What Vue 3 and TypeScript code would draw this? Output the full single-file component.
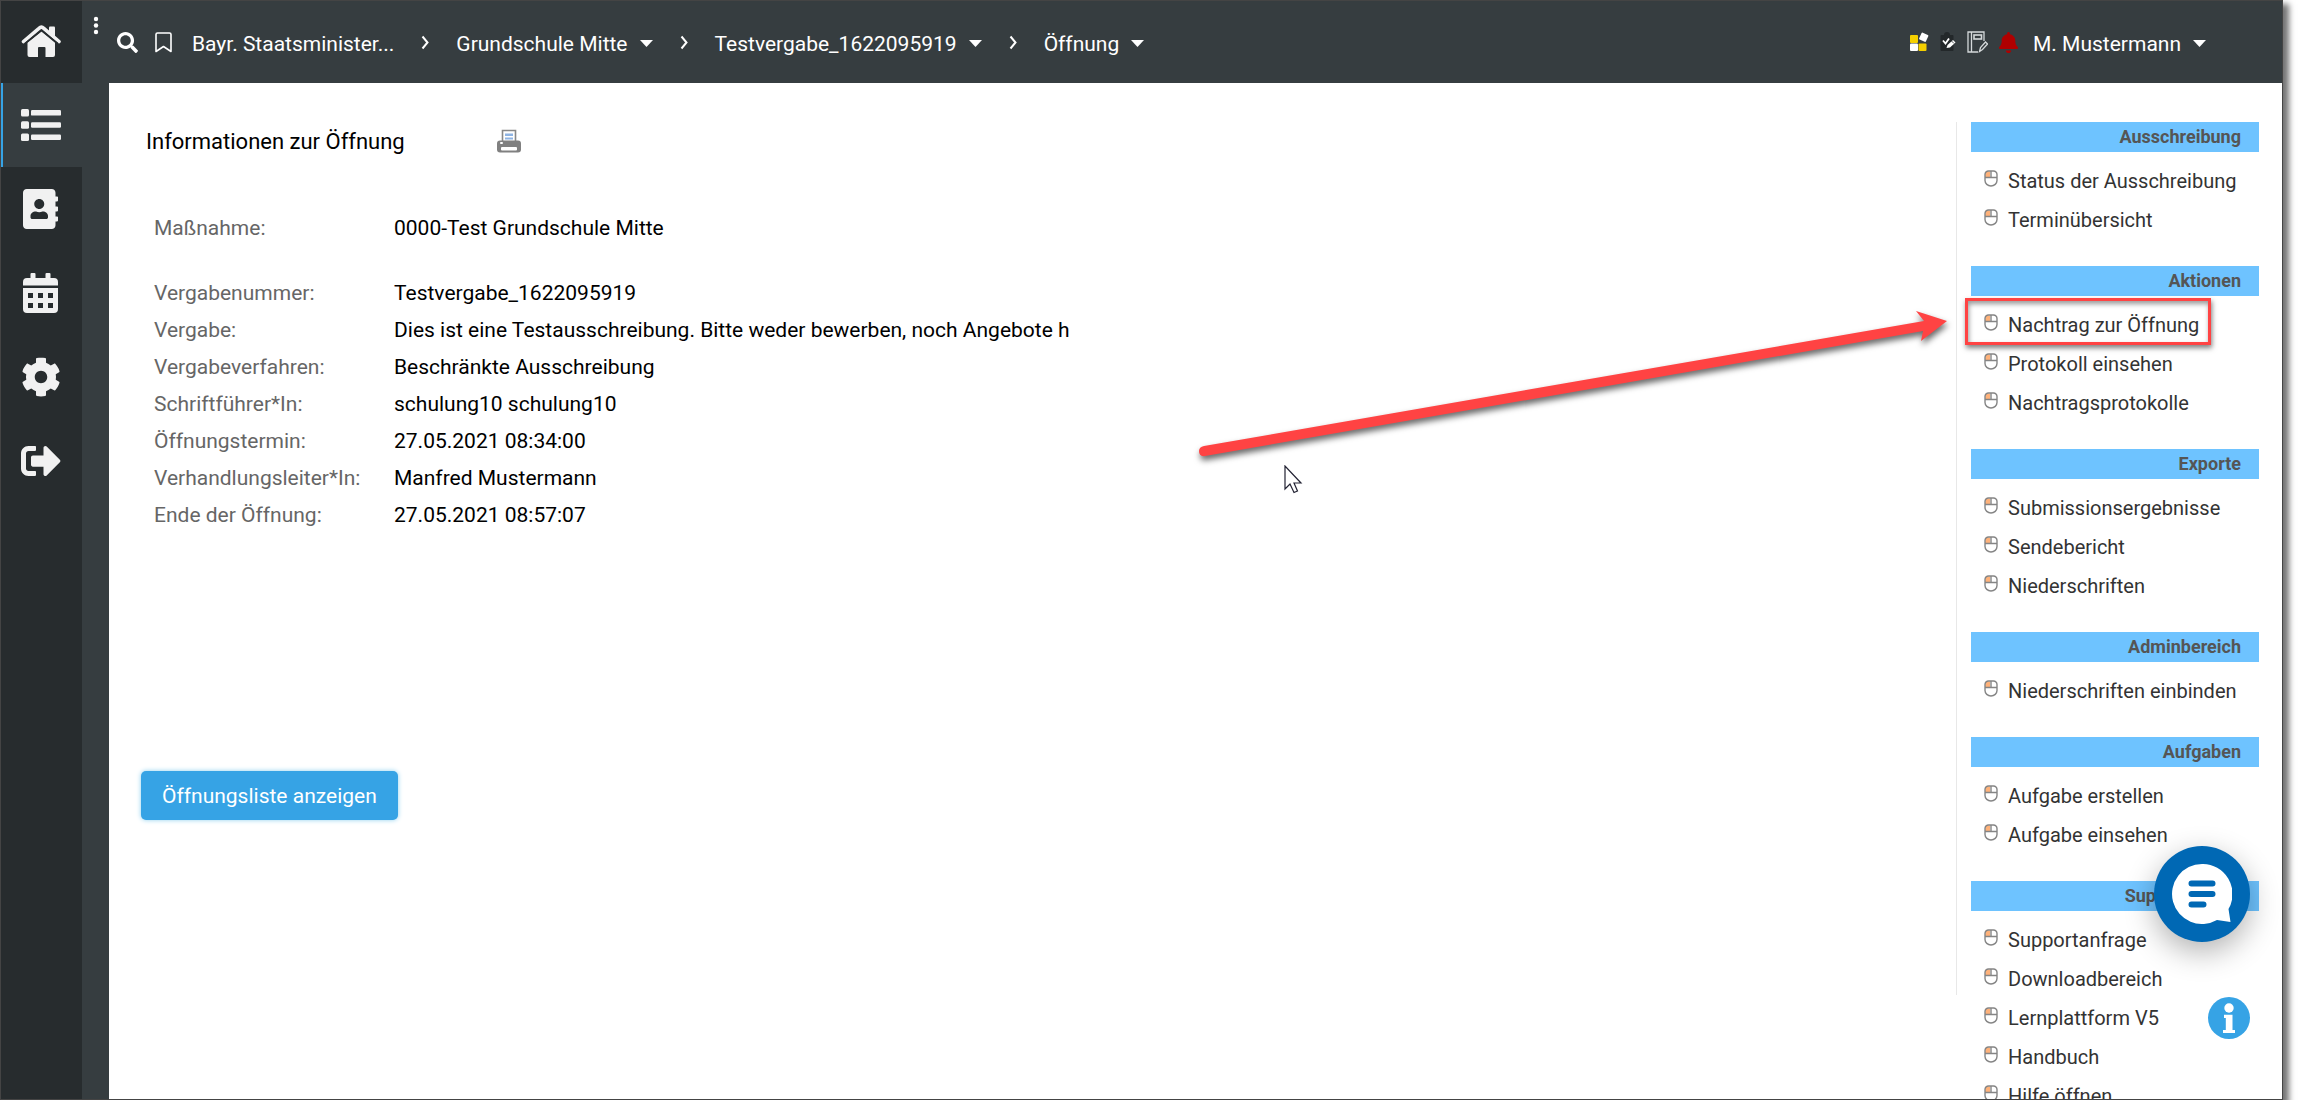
<script setup lang="ts">
interface NavItem {
  id: string
  label: string
  active?: boolean
}
interface MenuItem {
  label: string
  marked?: boolean
}
interface MenuSection {
  title: string
  items: MenuItem[]
}
interface Fact {
  label: string
  value: string
  spaced?: boolean
}

const navItems: NavItem[] = [
  { id: 'home', label: 'Startseite' },
  { id: 'list', label: 'Vergaben', active: true },
  { id: 'contacts', label: 'Adressbuch' },
  { id: 'calendar', label: 'Kalender' },
  { id: 'settings', label: 'Einstellungen' },
  { id: 'logout', label: 'Abmelden' },
]

const crumbs: string[] = ['Grundschule Mitte', 'Testvergabe_1622095919', 'Öffnung']

const facts: Fact[] = [
  { label: 'Maßnahme:', value: '0000-Test Grundschule Mitte', spaced: true },
  { label: 'Vergabenummer:', value: 'Testvergabe_1622095919' },
  { label: 'Vergabe:', value: 'Dies ist eine Testausschreibung. Bitte weder bewerben, noch Angebote h' },
  { label: 'Vergabeverfahren:', value: 'Beschränkte Ausschreibung' },
  { label: 'Schriftführer*In:', value: 'schulung10 schulung10' },
  { label: 'Öffnungstermin:', value: '27.05.2021 08:34:00' },
  { label: 'Verhandlungsleiter*In:', value: 'Manfred Mustermann' },
  { label: 'Ende der Öffnung:', value: '27.05.2021 08:57:07' },
]

const sections: MenuSection[] = [
  { title: 'Ausschreibung', items: [{ label: 'Status der Ausschreibung' }, { label: 'Terminübersicht' }] },
  {
    title: 'Aktionen',
    items: [{ label: 'Nachtrag zur Öffnung', marked: true }, { label: 'Protokoll einsehen' }, { label: 'Nachtragsprotokolle' }],
  },
  { title: 'Exporte', items: [{ label: 'Submissionsergebnisse' }, { label: 'Sendebericht' }, { label: 'Niederschriften' }] },
  { title: 'Adminbereich', items: [{ label: 'Niederschriften einbinden' }] },
  { title: 'Aufgaben', items: [{ label: 'Aufgabe erstellen' }, { label: 'Aufgabe einsehen' }] },
  {
    title: 'Supportcenter',
    items: [
      { label: 'Supportanfrage' },
      { label: 'Downloadbereich' },
      { label: 'Lernplattform V5' },
      { label: 'Handbuch' },
      { label: 'Hilfe öffnen' },
    ],
  },
]
</script>

<template>
  <div class="frame">
    <nav class="rail" aria-label="Hauptnavigation">
      <a v-for="item in navItems" :key="item.id" href="#" class="rail-link" :class="{ active: item.active }" :aria-label="item.label">
        <svg v-if="item.id === 'home'" width="40" height="40" viewBox="0 0 40 40">
          <path d="M20.500 9.500L34 20.800V33a2 2 0 0 1-2 2H24.500V26a1 1 0 0 0-1-1h-5.500a1 1 0 0 0-1 1v9H8.500a2 2 0 0 1-2-2V20.800z" />
          <path d="M2.500 19.500L18 6.300a3.600 3.600 0 0 1 4.800 0L38 19.500" fill="none" stroke="#f1f1f1" stroke-width="3.600" stroke-linecap="round" />
          <path d="M4 21.500L20.400 8.400L37 21.500" fill="none" stroke="#272c2e" stroke-width="1.400" />
          <path d="M28 5.500a1 1 0 0 1 1-1h4a1 1 0 0 1 1 1V15l-6-5z" />
        </svg>
        <svg v-else-if="item.id === 'list'" width="40" height="32" viewBox="0 0 40 32">
          <rect x="0" y="0" width="8" height="7.500" rx="1.500" /><rect x="10" y="1" width="30" height="5.600" rx="1.200" />
          <rect x="0" y="12.200" width="8" height="7.500" rx="1.500" /><rect x="10" y="13.200" width="30" height="5.600" rx="1.200" />
          <rect x="0" y="24.400" width="8" height="7.500" rx="1.500" /><rect x="10" y="25.400" width="30" height="5.600" rx="1.200" />
        </svg>
        <svg v-else-if="item.id === 'contacts'" width="35" height="40" viewBox="0 0 448 512">
          <path d="M436 160c6.600 0 12-5.400 12-12v-40c0-6.600-5.400-12-12-12h-20V48c0-26.500-21.500-48-48-48H48C21.500 0 0 21.500 0 48v416c0 26.500 21.500 48 48 48h320c26.500 0 48-21.500 48-48v-48h20c6.600 0 12-5.400 12-12v-40c0-6.600-5.400-12-12-12h-20v-64h20c6.600 0 12-5.400 12-12v-40c0-6.600-5.400-12-12-12h-20v-64h20zm-228-32c35.300 0 64 28.700 64 64s-28.700 64-64 64-64-28.700-64-64 28.700-64 64-64zm112 236.800c0 10.600-10 19.200-22.400 19.200H118.400C106 384 96 375.400 96 364.800v-19.200c0-31.800 30.100-57.600 67.200-57.600h5c12.300 5.100 25.700 8 39.800 8s27.600-2.900 39.800-8h5c37.100 0 67.200 25.800 67.200 57.600v19.200z" />
        </svg>
        <svg v-else-if="item.id === 'calendar'" width="35" height="40" viewBox="0 0 35 40">
          <path d="M0 12.500V9a4 4 0 0 1 4-4h3.500V1a1 1 0 0 1 1-1h3a1 1 0 0 1 1 1v4h10V1a1 1 0 0 1 1-1h3a1 1 0 0 1 1 1v4H31a4 4 0 0 1 4 4v3.500z" />
          <path fill-rule="evenodd" d="M0 15h35v21a4 4 0 0 1-4 4H4a4 4 0 0 1-4-4zM5 20v5h5v-5zM15 20v5h5v-5zM25 20v5h5v-5zM5 30v5h5v-5zM15 30v5h5v-5zM25 30v5h5v-5z" />
        </svg>
        <svg v-else-if="item.id === 'settings'" width="40" height="40" viewBox="0 0 512 512">
          <path d="M487.400 315.700l-42.600-24.600c4.300-23.200 4.300-47 0-70.200l42.600-24.600c4.900-2.800 7.100-8.600 5.500-14-11.100-35.600-30-67.800-54.700-94.600-3.800-4.100-10-5.100-14.800-2.300L380.800 110c-17.900-15.400-38.500-27.300-60.800-35.100V25.800c0-5.600-3.900-10.500-9.400-11.700-36.700-8.200-74.300-7.800-109.200 0-5.500 1.200-9.400 6.100-9.400 11.700V75c-22.200 7.900-42.800 19.800-60.800 35.100L88.700 85.500c-4.900-2.800-11-1.900-14.800 2.300-24.700 26.700-43.600 58.900-54.700 94.600-1.700 5.400.6 11.200 5.500 14L67.300 221c-4.300 23.200-4.300 47 0 70.200l-42.600 24.600c-4.900 2.800-7.100 8.600-5.500 14 11.100 35.600 30 67.800 54.700 94.600 3.800 4.100 10 5.100 14.800 2.300l42.600-24.600c17.900 15.400 38.500 27.300 60.800 35.100v49.200c0 5.600 3.900 10.500 9.400 11.700 36.700 8.200 74.300 7.800 109.200 0 5.500-1.200 9.400-6.100 9.400-11.700v-49.200c22.200-7.900 42.800-19.800 60.800-35.100l42.600 24.600c4.900 2.800 11 1.900 14.800-2.300 24.700-26.700 43.600-58.900 54.700-94.600 1.500-5.500-.7-11.300-5.600-14.100zM256 336c-44.100 0-80-35.900-80-80s35.900-80 80-80 80 35.900 80 80-35.900 80-80 80z" />
        </svg>
        <svg v-else width="40" height="40" viewBox="0 0 512 512">
          <path d="M497 273L329 441c-15 15-41 4.500-41-17v-96H152c-13.300 0-24-10.700-24-24v-96c0-13.300 10.700-24 24-24h136V88c0-21.400 25.900-32 41-17l168 168c9.300 9.400 9.300 24.600 0 34zM192 436v-40c0-6.600-5.400-12-12-12H96c-17.700 0-32-14.300-32-32V160c0-17.700 14.300-32 32-32h84c6.600 0 12-5.400 12-12V76c0-6.600-5.400-12-12-12H96c-53 0-96 43-96 96v192c0 53 43 96 96 96h84c6.600 0 12-5.400 12-12z" />
        </svg>
      </a>
    </nav>

    <div class="strip">
      <button type="button" class="icon-button" aria-label="Menü">
        <svg width="6" height="20" viewBox="0 0 6 20"><circle cx="3" cy="3" r="2.200" /><circle cx="3" cy="9.500" r="2.200" /><circle cx="3" cy="16" r="2.200" /></svg>
      </button>
    </div>

    <div class="page">
      <header class="topbar">
        <div class="tools">
          <button type="button" class="icon-button" aria-label="Suche">
            <svg width="21" height="21" viewBox="0 0 512 512"><path d="M505 442.700L405.300 343c-4.500-4.500-10.600-7-17-7H372c27.600-35.300 44-79.700 44-128C416 93.100 322.900 0 208 0S0 93.100 0 208s93.100 208 208 208c48.300 0 92.700-16.400 128-44v16.300c0 6.400 2.500 12.500 7 17l99.700 99.700c9.400 9.400 24.600 9.400 33.900 0l28.300-28.300c9.400-9.400 9.400-24.600.1-34zM208 336c-70.700 0-128-57.200-128-128 0-70.700 57.200-128 128-128 70.700 0 128 57.200 128 128 0 70.700-57.200 128-128 128z" /></svg>
          </button>
          <button type="button" class="icon-button" aria-label="Lesezeichen">
            <svg width="17" height="21" viewBox="0 0 17 21"><path d="M1 19.500V2.500a1.500 1.500 0 0 1 1.500-1.500h12A1.500 1.500 0 0 1 16 2.500v17L8.500 14.500z" fill="none" stroke="#fff" stroke-width="1.600" stroke-linejoin="round" /></svg>
          </button>
        </div>
        <nav class="crumbs" aria-label="Brotkrumen">
          <a href="#" class="crumb">Bayr. Staatsminister...</a>
          <template v-for="crumb in crumbs" :key="crumb">
            <svg width="8" height="15" viewBox="0 0 8 15"><path d="M1.500 1.500L6.500 7.500L1.500 13.500" fill="none" stroke="#fff" stroke-width="2" /></svg>
            <a href="#" class="crumb">
              {{ crumb }}
              <svg width="13" height="7" viewBox="0 0 13 7"><path d="M0 0h13L6.500 7z" /></svg>
            </a>
          </template>
        </nav>
        <div class="account">
          <button type="button" class="icon-button" aria-label="Anwendungen">
            <svg width="19" height="20" viewBox="0 0 19 20">
              <rect x="0" y="3" width="8" height="8" rx="1" fill="#f5d000" /><rect x="0" y="11.500" width="8" height="7.500" rx="1" />
              <rect x="8.500" y="11.500" width="8" height="7.500" rx="1" fill="#f5d000" /><rect x="10" y="1.500" width="7.500" height="7.500" rx="1" transform="rotate(25 13.700 5.200)" />
            </svg>
          </button>
          <button type="button" class="icon-button" aria-label="Aufgaben">
            <svg width="16" height="20" viewBox="0 0 16 20">
              <path d="M1.500 3h2.500a3 3 0 0 1 6 0h2.500a1 1 0 0 1 1 1v14a1 1 0 0 1-1 1h-11a1 1 0 0 1-1-1V4a1 1 0 0 1 1-1z" fill="#23282a" />
              <path d="M3 8.500l2.500 3L9 6.500" fill="none" stroke="#fff" stroke-width="1.800" /><path d="M6.500 16l1-3 5.500-5 2.500 2.500-5.500 5z" fill="#fff" /><path d="M11.500 9l2.500 2.500" stroke="#23282a" stroke-width="0.800" />
            </svg>
          </button>
          <button type="button" class="icon-button" aria-label="Notizen">
            <svg width="21" height="22" viewBox="0 0 21 22" fill="none" stroke="#d5d9da" stroke-width="1.300">
              <path d="M17 10V1H1v20h10M4.500 1v20" /><rect x="7" y="4" width="7.500" height="4" stroke-width="1.600" /><path d="M12.500 20.500l1-4 5-5.500 2 2-5 5.500z" />
            </svg>
          </button>
          <button type="button" class="icon-button" aria-label="Benachrichtigungen">
            <svg width="19" height="21" viewBox="0 0 448 512" preserveAspectRatio="none"><path fill="#b00000" d="M224 512c35.320 0 63.970-28.650 63.970-64H160.030c0 35.350 28.650 64 63.970 64zm215.390-149.710c-19.320-20.760-55.470-51.990-55.470-154.290 0-77.700-54.480-139.900-127.940-155.160V32c0-17.670-14.320-32-31.980-32s-31.980 14.330-31.980 32v20.840C118.560 68.100 64.080 130.300 64.080 208c0 102.300-36.150 133.530-55.470 154.290-6 6.450-8.660 14.160-8.610 21.710.11 16.400 12.980 32 32.100 32h383.800c19.120 0 32-15.600 32.100-32 .05-7.550-2.610-15.270-8.610-21.710z" /></svg>
          </button>
          <a href="#" class="crumb user">
            M. Mustermann
            <svg width="13" height="7" viewBox="0 0 13 7"><path d="M0 0h13L6.500 7z" /></svg>
          </a>
        </div>
      </header>

      <main class="content">
        <section class="info">
          <div class="title-row">
            <h1>Informationen zur Öffnung</h1>
            <button type="button" class="icon-button" aria-label="Drucken">
              <svg width="26" height="24" viewBox="0 0 26 24">
                <path d="M6.500 12V1.500h13V12" fill="#fff" stroke="#888" stroke-width="1.600" />
                <path d="M9 4.500h8v2.500H9zM9 8.500h8v2H9z" fill="#8fb4e3" />
                <rect x="1" y="11.500" width="24" height="12" rx="3" fill="#808080" /><rect x="4" y="13" width="3" height="2" rx="1" fill="#fff" /><rect x="5" y="18" width="16" height="3.500" rx="1" fill="#fff" />
              </svg>
            </button>
          </div>
          <dl class="facts">
            <div v-for="fact in facts" :key="fact.label" class="fact" :class="{ spaced: fact.spaced }">
              <dt>{{ fact.label }}</dt>
              <dd>{{ fact.value }}</dd>
            </div>
          </dl>
          <button type="button" class="primary">Öffnungsliste anzeigen</button>
        </section>

        <aside class="menu">
          <section v-for="section in sections" :key="section.title" class="menu-section">
            <h2>{{ section.title }}</h2>
            <ul>
              <li v-for="item in section.items" :key="item.label" :class="{ marked: item.marked }">
                <a href="#">
                  <svg class="mouse" width="14" height="17" viewBox="0 0 14 17">
                    <path d="M1.500 1.500H6V7H1z" fill="#ffb27a" />
                    <path d="M1 4.500A3.500 3.500 0 0 1 4.500 1h5A3.500 3.500 0 0 1 13 4.500v6a6 5.500 0 0 1-12 0zM1 7.500h12M7 1v6.500" fill="none" stroke="#858585" stroke-width="1.400" />
                  </svg>
                  {{ item.label }}
                </a>
              </li>
            </ul>
          </section>
        </aside>
      </main>
    </div>

    <svg class="arrow" width="764" height="160" viewBox="0 0 764 160">
      <path fill="#ff4343" d="M12 141L732 16L724 6L755 16L729 36L731 26L13 151Q7 152 7 146Q7 142 12 141z" />
    </svg>
    <svg class="pointer" width="20" height="30" viewBox="0 0 20 30">
      <path d="M1 1v23l5-5 4 8.500 3.500-1.500-3.500-8h7z" fill="#fff" stroke="#223" stroke-width="1.200" />
    </svg>

    <button type="button" class="chat" aria-label="Chat öffnen">
      <svg width="60" height="60" viewBox="0 0 60 60">
        <path d="M30 0a30 30 0 0 1 26.500 45L58.500 58L45 56A30 30 0 1 1 30 0z" fill="#fff" />
        <path d="M19.500 19.500h21M19.500 30h21M19.500 40.500h12" stroke="#0068b4" stroke-width="6" stroke-linecap="round" />
      </svg>
    </button>
    <button type="button" class="help" aria-label="Information">
      <svg width="42" height="42" viewBox="0 0 42 42">
        <circle cx="21" cy="21" r="21" fill="#36a3e5" /><circle cx="21" cy="11" r="4.700" fill="#fff" />
        <path d="M16 17.800h8.500V33H27v3H15v-3h2.800V21H16z" fill="#fff" />
      </svg>
    </button>
  </div>
</template>

<style>
body {
  margin: 0;
  background: #fff;
}
</style>

<style scoped>
.frame {
  position: relative;
  box-sizing: border-box;
  display: flex;
  height: calc(100vh - 15px);
  margin-right: 15px;
  border: 1px solid #444;
  background: #363d40;
  box-shadow: 5px 5px 6px 1px rgba(0, 0, 0, 0.55);
  font-family: Roboto, "Liberation Sans", sans-serif;
  font-size: 21px;
  overflow: hidden;
}
.icon-button {
  display: flex;
  padding: 0;
  border: 0;
  background: none;
  fill: #fff;
}
.rail {
  display: flex;
  flex-direction: column;
  width: 81px;
  background: #272c2e;
}
.rail-link {
  box-sizing: border-box;
  display: flex;
  align-items: center;
  justify-content: center;
  height: 84px;
  padding-right: 2px;
  fill: #f1f1f1;
}
.rail-link:first-child {
  height: 82px;
}
.rail-link.active {
  border-left: 2px solid #36a3e5;
  padding-right: 4px;
  background: #363d40;
}
.strip {
  display: flex;
  justify-content: center;
  align-items: flex-start;
  width: 27px;
  padding-top: 15px;
  box-sizing: border-box;
}
.page {
  flex: 1;
  min-width: 0;
  display: flex;
  flex-direction: column;
}
.topbar {
  display: flex;
  align-items: center;
  height: 82px;
  padding: 0 76px 0 8px;
  box-sizing: border-box;
  color: #fff;
}
.tools {
  display: flex;
  gap: 17px;
  margin-right: 20px;
}
.crumbs {
  display: flex;
  align-items: center;
  gap: 27px;
}
.crumb {
  display: flex;
  align-items: center;
  gap: 12px;
  padding-top: 3px;
  line-height: 24px;
  color: #fff;
  text-decoration: none;
  white-space: nowrap;
  fill: #fff;
}
.account {
  display: flex;
  align-items: center;
  gap: 11px;
  margin-left: auto;
}
.user {
  margin-left: 4px;
}
.content {
  flex: 1;
  min-height: 0;
  display: flex;
  padding: 39px 23px 104px 32px;
  background: #fff;
}
.info {
  flex: 1;
  min-width: 0;
}
.title-row {
  display: flex;
  align-items: center;
  gap: 91px;
  height: 38px;
  padding-left: 5px;
}
h1 {
  margin: 0;
  font-size: 22px;
  font-weight: 400;
  color: #000;
}
.facts {
  margin: 50px 0 237px;
  padding-left: 13px;
  line-height: 37px;
}
.fact {
  display: flex;
}
.spaced {
  margin-bottom: 28px;
}
dt {
  width: 240px;
  color: #666;
}
dd {
  margin: 0;
  color: #000;
}
.primary {
  height: 49px;
  padding: 0 21px;
  border: 0;
  border-radius: 5px;
  background: #36a3e5;
  box-shadow: 0 0 5px #8fd0ee;
  color: #fff;
  font-family: inherit;
  font-size: 21px;
}
.menu {
  width: 288px;
  padding-left: 14px;
  border-left: 1px solid #e8e8e8;
}
.menu-section {
  margin-bottom: 26px;
}
h2 {
  margin: 0 0 10px;
  padding-right: 18px;
  background: #6ec3ff;
  color: #555;
  font-size: 18px;
  font-weight: 700;
  line-height: 30px;
  text-align: right;
}
ul {
  margin: 0;
  padding: 0;
  list-style: none;
}
li {
  position: relative;
}
li a {
  display: flex;
  align-items: center;
  gap: 10px;
  padding-left: 13px;
  line-height: 39px;
  font-size: 20px;
  color: #333;
  text-decoration: none;
  white-space: nowrap;
}
.mouse {
  margin-bottom: 6px;
}
.marked::after {
  content: "";
  position: absolute;
  top: -8px;
  left: -6px;
  width: 240px;
  height: 41px;
  border: 3px solid #ff4343;
  box-shadow: 1px 3px 5px rgba(0, 0, 0, 0.5), inset 1px 3px 5px rgba(0, 0, 0, 0.4);
}
.arrow {
  position: absolute;
  top: 304px;
  right: 326px;
  filter: drop-shadow(1px 4px 3px rgba(0, 0, 0, 0.6));
}
.pointer {
  position: absolute;
  top: 464px;
  right: 978px;
}
.chat {
  position: absolute;
  right: 32px;
  bottom: 157px;
  display: flex;
  align-items: center;
  justify-content: center;
  width: 96px;
  height: 96px;
  padding: 0;
  border: 0;
  border-radius: 50%;
  background: #0068b4;
  box-shadow: 0 10px 30px rgba(0, 0, 0, 0.3);
}
.help {
  position: absolute;
  right: 32px;
  bottom: 60px;
  display: flex;
  padding: 0;
  border: 0;
  background: none;
}
</style>
